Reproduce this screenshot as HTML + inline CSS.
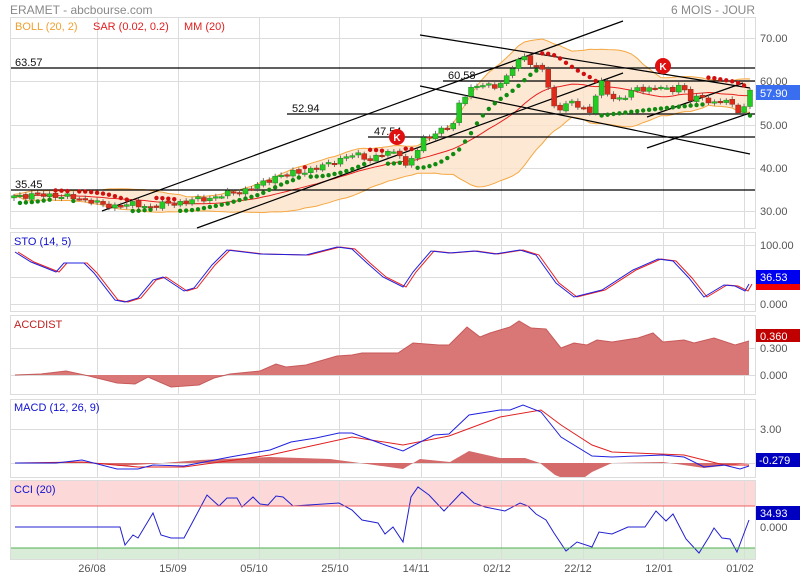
<!DOCTYPE html>
<html><head><meta charset="utf-8"><style>
body{margin:0;background:#fff;}
svg{display:block;font-family:"Liberation Sans",Arial,sans-serif;}
</style></head><body>
<svg id="s" width="800" height="580" viewBox="0 0 800 580" xmlns="http://www.w3.org/2000/svg">
<rect width="800" height="580" fill="#fff"/>
<g id="grid" stroke="#dcdcdc" stroke-width="1" fill="none">
<rect x="10.5" y="17.5" width="745" height="211"/>
<rect x="10.5" y="232.5" width="745" height="79"/>
<rect x="10.5" y="315.5" width="745" height="79"/>
<rect x="10.5" y="399.5" width="745" height="78"/>
<rect x="10.5" y="480.5" width="745" height="79"/>
<path d="M11 38.5H755M11 81.5H755M11 125.5H755M11 168.5H755M11 211.5H755M11 245.5H755M11 277.5H755M11 304.5H755M11 348.5H755M11 375.5H755M11 429.5H755M11 463.5H755"/>
</g>
<rect x="11" y="481" width="744" height="25" fill="#fdd8d8"/>
<rect x="11" y="548" width="744" height="11" fill="#d8ecd8"/>
<g id="vg" stroke="#dcdcdc" stroke-width="1"></g>
<g id="dyn"></g>
<line x1="11" y1="506" x2="755" y2="506" stroke="#f06060"/>
<line x1="11" y1="548" x2="755" y2="548" stroke="#50b050"/>
<text x="10" y="14" font-size="12" fill="#888">ERAMET - abcbourse.com</text>
<text x="755" y="14" font-size="12" fill="#888" text-anchor="end">6 MOIS - JOUR</text>
<text x="15" y="30" font-size="11" fill="#f0a030">BOLL (20, 2)</text>
<text x="93" y="30" font-size="11" fill="#e02020">SAR (0.02, 0.2)</text>
<text x="184" y="30" font-size="11" fill="#e02020">MM (20)</text>
<text x="14" y="245" font-size="11" fill="#1010d0">STO (14, 5)</text>
<text x="14" y="328" font-size="11" fill="#c02020">ACCDIST</text>
<text x="14" y="411" font-size="11" fill="#1010d0">MACD (12, 26, 9)</text>
<text x="14" y="493" font-size="11" fill="#1010d0">CCI (20)</text>
<g font-size="11" fill="#555">
<text x="760" y="42">70.00</text><text x="760" y="85">60.00</text><text x="760" y="129">50.00</text><text x="760" y="172">40.00</text><text x="760" y="215">30.00</text>
<text x="760" y="249">100.00</text><text x="760" y="308">0.000</text>
<text x="760" y="352">0.300</text><text x="760" y="379">0.000</text>
<text x="760" y="433">3.00</text><text x="760" y="531">0.000</text>
</g>
<rect x="756" y="85" width="44" height="15" fill="#3a6ef0"/><text x="760" y="97" font-size="11" fill="#fff">57.90</text>
<rect x="756" y="283" width="44" height="7" fill="#f00000"/>
<rect x="756" y="270" width="44" height="14" fill="#0000f0"/><text x="760" y="281" font-size="11" fill="#fff">36.53</text>
<rect x="756" y="329" width="44" height="13" fill="#c00000"/><text x="760" y="340" font-size="11" fill="#fff">0.360</text>
<rect x="756" y="453" width="44" height="14" fill="#0000c0"/><text x="759" y="464" font-size="11" fill="#fff">-0.279</text>
<rect x="756" y="506" width="44" height="14" fill="#0000c0"/><text x="760" y="517" font-size="11" fill="#fff">34.93</text>
<g font-size="11" fill="#555" text-anchor="middle">
<text x="92" y="572">26/08</text><text x="173" y="572">15/09</text><text x="254" y="572">05/10</text><text x="335" y="572">25/10</text><text x="416" y="572">14/11</text><text x="497" y="572">02/12</text><text x="578" y="572">22/12</text><text x="659" y="572">12/01</text><text x="740" y="572">01/02</text>
</g>
<g font-size="11" fill="#111">
<text x="15" y="66">63.57</text><text x="15" y="188">35.45</text><text x="292" y="112">52.94</text><text x="374" y="135">47.54</text><text x="448" y="79">60.58</text>
</g>
<g id="kk"></g>
</svg>
<script>
const dyn=document.getElementById('dyn');
let h='';
[97,178,259,339,421,501,583,663,744].forEach(x=>{
 document.getElementById('vg').innerHTML+=`<line x1="${x+.5}" y1="18" x2="${x+.5}" y2="228"/><line x1="${x+.5}" y1="233" x2="${x+.5}" y2="311"/><line x1="${x+.5}" y1="316" x2="${x+.5}" y2="394"/><line x1="${x+.5}" y1="400" x2="${x+.5}" y2="477"/><line x1="${x+.5}" y1="481" x2="${x+.5}" y2="559"/>`;
});
const yv=v=>81-(v-60)*4.33;
const K=[[14,33.5],[50,33.7],[90,32.5],[105,31],[130,31.5],[150,31],[180,32],[210,33],[240,34.5],[260,36],[275,38],[290,38.5],[320,40],[340,42],[355,43],[370,42],[390,43.5],[400,43.5],[405,40],[415,43],[425,47],[440,48.5],[455,50],[460,56],[470,58],[480,59],[495,59],[505,60],[515,64],[525,66],[535,63],[545,62.5],[552,54],[560,54],[570,55],[580,54],[590,53],[600,60],[610,56],[620,56],[635,58],[645,58],[660,59],[670,57],[680,59.5],[690,56],[700,56],[715,55],[725,56],[735,53],[742,53],[750,57.9]];
function interp(x){for(let i=1;i<K.length;i++){if(x<=K[i][0]){const a=K[i-1],b=K[i];return a[1]+(b[1]-a[1])*(x-a[0])/(b[0]-a[0]);}}return K[K.length-1][1];}
const N=125,xs=[],C=[],O=[],H=[],L=[];
for(let i=0;i<N;i++){const x=14+i*736/(N-1);xs.push(x);let c=interp(x)+0.5*Math.sin(i*2.3)+0.3*Math.sin(i*5.1);if(i==N-1)c=57.9;C.push(c);}
for(let i=0;i<N;i++){O.push(i?C[i-1]+0.2*Math.sin(i*3.7):C[i]-0.5);H.push(Math.max(O[i],C[i])+0.4+0.3*Math.abs(Math.sin(i*1.7)));L.push(Math.min(O[i],C[i])-0.4-0.3*Math.abs(Math.cos(i*1.3)));}
const up=[],dn=[],ma=[];
for(let i=0;i<N;i++){const s=Math.max(0,i-19),a=C.slice(s,i+1);const m=a.reduce((p,q)=>p+q,0)/a.length;const sd=Math.sqrt(a.reduce((p,q)=>p+(q-m)*(q-m),0)/a.length);ma.push(m);up.push(m+2*sd+0.3);dn.push(m-2*sd-0.3);}
let band='M'+xs.map((x,i)=>x.toFixed(1)+' '+yv(up[i]).toFixed(1)).join(' L')+' L'+xs.map((x,i)=>x.toFixed(1)+' '+yv(dn[i]).toFixed(1)).reverse().join(' L')+'Z';
h+=`<path d="${band}" fill="#fde3c8" fill-opacity="0.8"/>`;
h+=`<polyline points="${xs.map((x,i)=>x.toFixed(1)+','+yv(up[i]).toFixed(1)).join(' ')}" fill="none" stroke="#f5a742" stroke-width="1"/>`;
h+=`<polyline points="${xs.map((x,i)=>x.toFixed(1)+','+yv(dn[i]).toFixed(1)).join(' ')}" fill="none" stroke="#f5a742" stroke-width="1"/>`;
h+=`<polyline points="${xs.map((x,i)=>x.toFixed(1)+','+yv(ma[i]).toFixed(1)).join(' ')}" fill="none" stroke="#e82020" stroke-width="1"/>`;
h+=`<g stroke="#000" stroke-width="1.2"><line x1="11" y1="68" x2="755" y2="68"/><line x1="11" y1="190" x2="755" y2="190"/><line x1="287" y1="114" x2="755" y2="114"/><line x1="368" y1="137" x2="755" y2="137"/><line x1="443" y1="81" x2="755" y2="81"/>
<line x1="102" y1="211" x2="623" y2="21"/><line x1="197" y1="228" x2="623" y2="73"/><line x1="420" y1="35" x2="750" y2="88"/><line x1="420" y1="86" x2="750" y2="154"/><line x1="647" y1="117" x2="743" y2="83"/><line x1="647" y1="148" x2="750" y2="113"/></g>`;
for(let i=0;i<N;i++){const x=xs[i],g=C[i]>=O[i];const t=yv(Math.max(O[i],C[i])),b=yv(Math.min(O[i],C[i]));
h+=`<line x1="${x}" y1="${yv(H[i])}" x2="${x}" y2="${yv(L[i])}" stroke="#555" stroke-width="0.8"/><rect x="${x-2.5}" y="${t}" width="5" height="${Math.max(1.5,b-t)}" fill="${g?'#22cc22':'#dd2a1a'}" stroke="${g?'#2a7a2a':'#8a2a1a'}" stroke-width="0.5"/>`;}
let bull=true,af=0.02,ep=H[0],sar=L[0]-0.5;
for(let i=1;i<N;i++){sar=sar+af*(ep-sar);
 if(bull){if(L[i]<sar){bull=false;sar=ep;ep=L[i];af=0.02;}else if(H[i]>ep){ep=H[i];af=Math.min(0.2,af+0.02);}}
 else{if(H[i]>sar){bull=true;sar=ep;ep=H[i];af=0.02;}else if(L[i]<ep){ep=L[i];af=Math.min(0.2,af+0.02);}}
 h+=`<circle cx="${xs[i]}" cy="${yv(sar)}" r="2.2" fill="${bull?'#108a10':'#d01010'}"/>`;}
const pl=(p,c,w)=>`<polyline points="${p}" fill="none" stroke="${c}" stroke-width="${w||1}"/>`;
const sto="15,252 31,262 56,272 64,263 84,263 94,273 115,300 125,302 138,298 153,280 163,277 184,291 194,288 212,265 227,250 260,254 306,255 337,247 352,249 367,263 383,277 403,287 413,272 431,251 449,253 474,251 495,254 520,250 536,255 556,283 574,297 602,290 633,270 658,259 673,261 689,278 704,297 724,285 735,286 745,291 749,284";
const stoR=sto.split(' ').map(p=>{const[a,b]=p.split(',').map(Number);return (a+3)+','+b;}).join(' ');
h+=pl(stoR,'#e82020')+pl(sto,'#2020e0');
const acc="15,375 41,374 66,371 89,376 117,383 135,384 148,377 171,387 199,385 214,378 230,374 260,371 276,364 286,367 306,365 337,356 352,355 362,353 398,353 413,343 439,345 449,345 467,327 480,337 490,333 510,327 519,321 531,328 546,329 561,348 574,343 587,345 597,340 612,342 638,338 653,333 663,342 684,340 694,343 714,338 735,345 749,341";
h+=`<polygon points="15,375 ${acc} 749,375" fill="#d97777"/>`+pl(acc,'#c85a5a');
h+=`<polygon points="15,463 82,462 120,466 150,464 200,460 270,457 330,459 360,463 403,469 420,459 450,462 469,451 500,458 525,458 540,463 555,475 560,477 585,477 592,472 612,463 663,462 704,468 749,463" fill="#d46a6a"/>`;
h+=pl("15,463 82,462 138,467 184,467 270,455 352,437 403,445 449,436 500,417 541,410 561,425 592,445 612,452 684,455 724,465 749,465",'#e02020');
h+=pl("15,463 56,463 82,460 117,469 138,469 153,465 184,466 230,457 270,450 291,442 316,438 339,433 352,433 388,446 403,451 434,435 449,434 469,415 500,410 510,410 523,405 541,412 561,437 592,456 612,457 663,455 684,457 704,467 724,465 740,469 749,466",'#2020e0');
h+=pl("15,527 120,527 125,545 133,535 138,538 153,513 161,535 171,538 184,538 191,525 207,495 219,506 227,498 237,498 242,507 253,497 260,504 268,505 276,496 283,497 293,506 339,503 352,510 362,520 378,523 385,534 393,527 403,542 411,497 418,487 429,495 444,511 462,492 474,503 485,507 505,511 520,503 528,506 536,514 546,520 554,533 566,551 577,542 592,547 599,532 612,534 628,527 645,527 656,511 666,521 673,514 686,539 699,553 709,537 714,528 722,538 730,539 737,552 749,520",'#2020d0');
dyn.innerHTML=h;
document.getElementById('kk').innerHTML=`<circle cx="397" cy="137" r="8" fill="#e01010"/><text x="397" y="141" font-size="10" fill="#fff" text-anchor="middle" font-weight="bold">K</text><circle cx="663" cy="66" r="8" fill="#e01010"/><text x="663" y="70" font-size="10" fill="#fff" text-anchor="middle" font-weight="bold">K</text>`;
</script>
</body></html>
